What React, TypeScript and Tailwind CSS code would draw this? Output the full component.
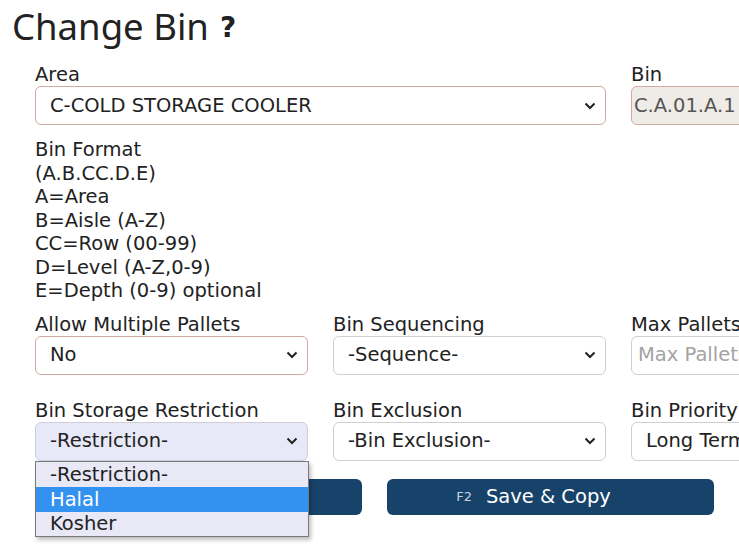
import React from "react";

type Tone = "warn" | "plain" | "focus";

const borderFor: Record<Tone, string> = {
  warn: "border-[#cfaaa2] bg-white",
  plain: "border-[#cfcfcf] bg-white",
  focus: "border-[#cfcfd8] bg-[#e8e9f8]",
};

function Chevron() {
  return (
    <svg width="12" height="8" viewBox="0 0 12 8" className="shrink-0">
      <path d="M1.5 1.5L6 6l4.5-4.5" fill="none" stroke="#222" strokeWidth="2" />
    </svg>
  );
}

function Select({ value, tone = "plain" }: { value: string; tone?: Tone }) {
  return (
    <div
      className={`flex h-[39px] items-center justify-between rounded-[6px] border pl-[14px] pr-[9px] ${borderFor[tone]}`}
    >
      <span className="whitespace-nowrap">{value}</span>
      <Chevron />
    </div>
  );
}

function Field({
  label,
  className = "",
  children,
}: {
  label: string;
  className?: string;
  children: React.ReactNode;
}) {
  return (
    <div className={className}>
      <div className="h-[23px] leading-[23px] whitespace-nowrap">{label}</div>
      {children}
    </div>
  );
}

const formatLines = [
  "Bin Format",
  "(A.B.CC.D.E)",
  "A=Area",
  "B=Aisle (A-Z)",
  "CC=Row (00-99)",
  "D=Level (A-Z,0-9)",
  "E=Depth (0-9) optional",
];

export default function App() {
  return (
    <div className="relative h-[550px] w-[739px] overflow-hidden bg-white text-[19.5px] text-[#222] font-['DejaVu_Sans',sans-serif]">
      <h1 className="flex h-[48px] items-start pl-[12px] pt-[5px] leading-[43px] text-[36.5px] font-['Noto_Sans',sans-serif] text-[#222]">
        Change Bin
        <span className="ml-[11px] mt-[1px] text-[28px] font-bold font-['DejaVu_Sans',sans-serif]">?</span>
      </h1>

      <div className="w-max pl-[35px]">
        <div className="mt-[15px] grid grid-cols-[repeat(4,273px)] gap-x-[25px]">
          <Field label="Area" className="col-span-2">
            <Select value="C-COLD STORAGE COOLER" tone="warn" />
          </Field>
          <Field label="Bin">
            <div className="flex h-[39px] items-center rounded-[6px] border border-[#cfaaa2] bg-[#efebe7] pl-[2px] text-[#555]">
              C.A.01.A.1
            </div>
          </Field>
        </div>

        <div className="mt-[13px] leading-[23.5px]">
          {formatLines.map((l) => (
            <div key={l}>{l}</div>
          ))}
        </div>

        <div className="mt-[10px] grid grid-cols-[repeat(4,273px)] gap-x-[25px]">
          <Field label="Allow Multiple Pallets">
            <Select value="No" tone="warn" />
          </Field>
          <Field label="Bin Sequencing">
            <Select value="-Sequence-" />
          </Field>
          <Field label="Max Pallets">
            <div className="flex h-[39px] items-center rounded-[6px] border border-[#cfcfcf] pl-[6px] text-[#a3a3a3]">
              Max Pallets
            </div>
          </Field>
          <Field label="Pallet Type">
            <Select value="-Pallet Type-" />
          </Field>
        </div>

        <div className="mt-[24px] grid grid-cols-[repeat(4,273px)] gap-x-[25px]">
          <Field label="Bin Storage Restriction">
            <Select value="-Restriction-" tone="focus" />
          </Field>
          <Field label="Bin Exclusion">
            <Select value="-Bin Exclusion-" />
          </Field>
          <Field label="Bin Priority">
            <Select value="Long Term" />
          </Field>
          <Field label="Status">
            <Select value="Active" />
          </Field>
        </div>

        <div className="mt-[18px] grid grid-cols-[repeat(3,327px)] gap-x-[25px]">
          <button className="flex h-[36px] items-center justify-center rounded-[6px] bg-[#17436b] pr-[34px] text-white">
            <span className="mr-[14px] text-[13px] text-[#c9d2dc]">F1</span>
            Save
          </button>
          <button className="flex h-[36px] items-center justify-center rounded-[6px] bg-[#17436b] pr-[34px] text-white">
            <span className="mr-[14px] text-[13px] text-[#c9d2dc]">F2</span>
            Save &amp; Copy
          </button>
          <button className="flex h-[36px] items-center justify-center rounded-[6px] border border-[#8a8a8a] bg-white text-[#222]">
            Cancel
          </button>
        </div>
      </div>

      <div className="absolute left-[35px] top-[461px] w-[274px] border border-[#7a7a7a] bg-[#e8e8f7] shadow-[2px_3px_4px_rgba(0,0,0,0.25)]">
        <div className="h-[25px] pl-[14px] leading-[25px]">-Restriction-</div>
        <div className="h-[25px] bg-[#3391ef] pl-[14px] leading-[25px] text-white">Halal</div>
        <div className="h-[24px] pl-[14px] leading-[24px]">Kosher</div>
      </div>
    </div>
  );
}
